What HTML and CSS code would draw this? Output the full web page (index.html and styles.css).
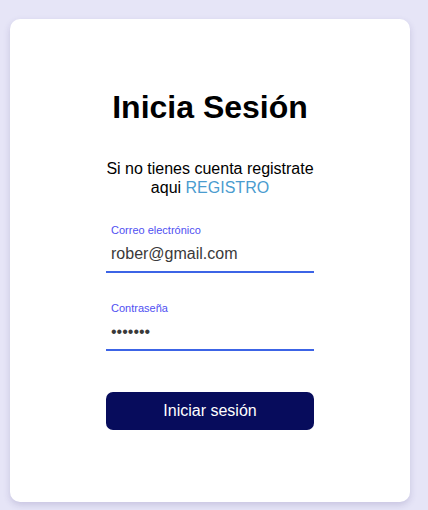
FILE: index.html
```html
<!DOCTYPE html>
<html lang="es">
<head>
<meta charset="utf-8">
<title>Inicia Sesión</title>
<link rel="stylesheet" href="styles.css">
</head>
<body>
  <main class="card">
    <form class="login">
      <h1 class="title">Inicia Sesión</h1>
      <p class="subtitle">
        <span class="subtitle-line">Si no tienes cuenta registrate</span>
        <span class="subtitle-line">aqui <a class="link" href="#">REGISTRO</a></span>
      </p>
      <div class="field">
        <label class="label" for="email">Correo electrónico</label>
        <input class="input" id="email" type="email" value="rober@gmail.com">
      </div>
      <div class="field field-pass">
        <label class="label" for="pass">Contraseña</label>
        <input class="input" id="pass" type="password" value="1234567">
      </div>
      <button class="btn" type="button">Iniciar sesión</button>
    </form>
  </main>
</body>
</html>
```

FILE: styles.css
```css
* { box-sizing: border-box; }

html, body {
  margin: 0;
  background: #e6e5f7;
}

body {
  padding: 19px 10px;
  font-family: "Liberation Sans", Arial, sans-serif;
}

.card {
  width: 400px;
  background: #ffffff;
  border-radius: 10px;
  box-shadow: 0 3px 7px rgba(60, 50, 120, 0.18);
  padding: 70px 0 72px;
  display: flex;
  justify-content: center;
}

.login {
  width: 208px;
  display: flex;
  flex-direction: column;
  align-items: stretch;
}

.title {
  margin: 0;
  font-size: 32px;
  font-weight: 700;
  line-height: 37px;
  text-align: center;
  color: #000;
  white-space: nowrap;
}

.subtitle {
  margin: 33px 0 0;
  font-size: 16px;
  line-height: 19px;
  text-align: center;
  color: #000;
  display: flex;
  flex-direction: column;
  align-items: center;
}

.subtitle-line {
  display: block;
  white-space: nowrap;
}

.link {
  color: #4a9ccf;
  text-decoration: none;
}

.field {
  margin-top: 27px;
  display: flex;
  flex-direction: column;
}

.field-pass {
  margin-top: 29px;
}

.label {
  font-size: 11px;
  line-height: 12.5px;
  color: #5050f2;
  padding-left: 5px;
}

.input {
  display: block;
  width: 100%;
  margin: 0;
  border: none;
  border-bottom: 2px solid #3c64e6;
  outline: none;
  background: transparent;
  padding: 8px 5px 8px;
  font-family: "Liberation Sans", Arial, sans-serif;
  font-size: 16px;
  line-height: 18.5px;
  height: 36.5px;
  color: #3a3a3a;
}

.btn {
  margin-top: 41px;
  height: 38px;
  border: none;
  border-radius: 7px;
  background: #070c5c;
  color: #ffffff;
  font-family: "Liberation Sans", Arial, sans-serif;
  font-size: 16px;
  cursor: pointer;
}
```
